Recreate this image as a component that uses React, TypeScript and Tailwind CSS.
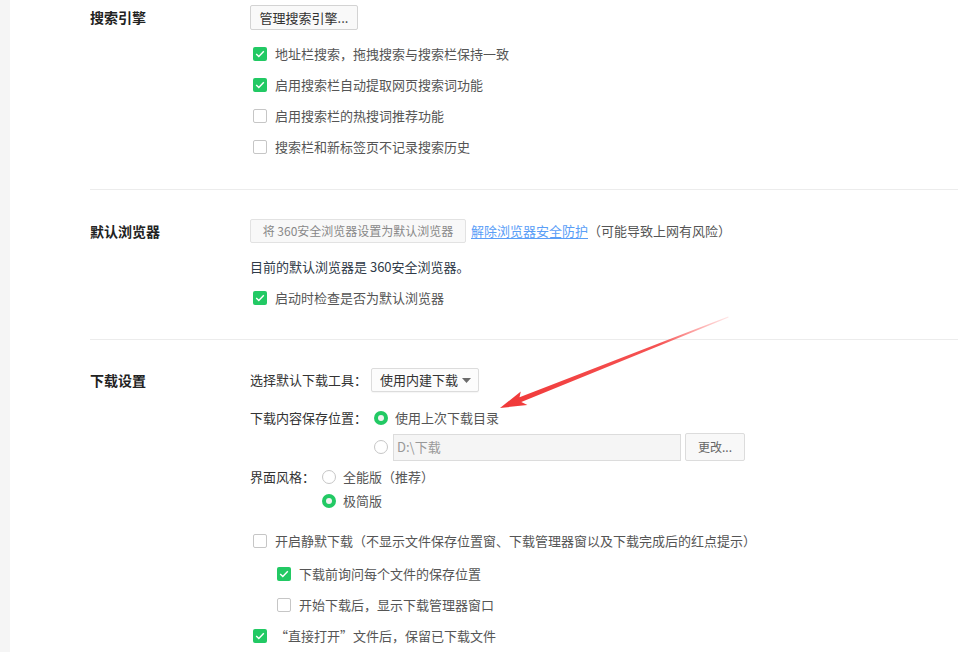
import React from 'react'

function Check({ on }: { on?: boolean }) {
  if (on) {
    return (
      <span className="w-[14px] h-[14px] rounded-[2px] bg-[#22c964] flex items-center justify-center shrink-0">
        <svg width="10" height="8" viewBox="0 0 10 8">
          <path d="M1.2 4.1l2.6 2.5L8.8 1.3" stroke="#fff" strokeWidth="1.4" fill="none" />
        </svg>
      </span>
    )
  }
  return <span className="w-[14px] h-[14px] rounded-[2px] border border-[#c6c6c6] bg-white shrink-0" />
}

function Radio({ on }: { on?: boolean }) {
  if (on) {
    return (
      <span className="w-[14px] h-[14px] rounded-full bg-[#22c964] flex items-center justify-center shrink-0">
        <span className="w-[6px] h-[6px] rounded-full bg-[#f2f2f2]" />
      </span>
    )
  }
  return <span className="w-[14px] h-[14px] rounded-full border border-[#c6c6c6] bg-white shrink-0" />
}

function CheckRow({ on, label, indent }: { on?: boolean; label: string; indent?: boolean }) {
  return (
    <div className={`flex items-center h-[31px] gap-[8px] ${indent ? 'pl-[27px]' : 'pl-[3px]'}`}>
      <Check on={on} />
      <span className="text-[13px] text-[#555]">{label}</span>
    </div>
  )
}

function Section({
  title,
  className,
  titleH,
  children,
}: {
  title: string
  className: string
  titleH: string
  children: React.ReactNode
}) {
  return (
    <div className={`flex border-b border-[#ececec] ${className}`}>
      <div className={`w-[160px] shrink-0 text-[14px] font-bold text-[#222] ${titleH}`}>{title}</div>
      <div className="flex-1 flex flex-col">{children}</div>
    </div>
  )
}

export default function App() {
  return (
    <div className="relative w-[958px] h-[652px] overflow-hidden bg-white flex font-['Noto_Sans_CJK_SC',sans-serif] leading-[20px]">
      <div className="w-[10px] shrink-0 bg-[#f5f5f5]" />
      <div className="flex-1 pl-[80px]">
        {/* 搜索引擎 */}
        <Section title="搜索引擎" className="pt-[5px] pb-[27px]" titleH="leading-[25px]">
          <button className="w-[108px] h-[25px] border border-[#d3d3d3] rounded-[2px] bg-[#f9f9f9] text-[13px] text-[#333] flex items-center justify-center">
            管理搜索引擎...
          </button>
          <div className="mt-[8px]">
            <CheckRow on label="地址栏搜索，拖拽搜索与搜索栏保持一致" />
            <CheckRow on label="启用搜索栏自动提取网页搜索词功能" />
            <CheckRow label="启用搜索栏的热搜词推荐功能" />
            <CheckRow label="搜索栏和新标签页不记录搜索历史" />
          </div>
        </Section>

        {/* 默认浏览器 */}
        <Section title="默认浏览器" className="pt-[29px] pb-[26px]" titleH="leading-[24px]">
          <div className="flex items-center h-[24px]">
            <button className="w-[216px] h-[24px] border border-[#e2e2e2] rounded-[2px] bg-[#f8f8f8] text-[12px] text-[#888] flex items-center justify-center">
              将 360安全浏览器设置为默认浏览器
            </button>
            <span className="ml-[5px] text-[13px] text-[#5a9ef7] underline underline-offset-2">解除浏览器安全防护</span>
            <span className="text-[13px] text-[#555]">（可能导致上网有风险）</span>
          </div>
          <div className="mt-[14px] text-[13px] text-[#2f3a48]">目前的默认浏览器是 360安全浏览器。</div>
          <div className="mt-[5px]">
            <CheckRow on label="启动时检查是否为默认浏览器" />
          </div>
        </Section>

        {/* 下载设置 */}
        <Section title="下载设置" className="pt-[28px] border-b-0" titleH="leading-[24px]">
          <div className="flex items-center h-[24px] gap-[4px]">
            <span className="text-[13px] text-[#333]">选择默认下载工具：</span>
            <div className="w-[108px] h-[24px] border border-[#dcdcdc] rounded-[2px] bg-[#fcfcfc] shadow-[0_1px_1px_rgba(0,0,0,0.04)] flex items-center justify-between pl-[8px] pr-[7px]">
              <span className="text-[13px] text-[#333]">使用内建下载</span>
              <svg width="9" height="5" viewBox="0 0 9 5">
                <path d="M0 0h9L4.5 5z" fill="#6b6b6b" />
              </svg>
            </div>
          </div>

          <div className="mt-[14px] flex items-start gap-[7px]">
            <span className="text-[13px] text-[#333] leading-[24px]">下载内容保存位置：</span>
            <div className="flex flex-col">
              <div className="flex items-center h-[24px] gap-[7px]">
                <Radio on />
                <span className="text-[13px] text-[#555]">使用上次下载目录</span>
              </div>
              <div className="mt-[3px] flex items-center gap-[5px]">
                <Radio />
                <div className="w-[288px] h-[27px] border border-[#dcdcdc] bg-[#f5f5f5] flex items-center pl-[3px] text-[13px] text-[#999]">
                  D:\下载
                </div>
                <button className="ml-[-1px] w-[60px] h-[28px] border border-[#dcdcdc] bg-[#f8f8f8] rounded-[2px] text-[12px] text-[#666] flex items-center justify-center">
                  更改...
                </button>
              </div>
            </div>
          </div>

          <div className="mt-[4px] flex items-start gap-[7px]">
            <span className="text-[13px] text-[#333] leading-[24px]">界面风格：</span>
            <div className="flex flex-col">
              <div className="flex items-center h-[24px] gap-[7px]">
                <Radio />
                <span className="text-[13px] text-[#555]">全能版（推荐）</span>
              </div>
              <div className="flex items-center h-[24px] gap-[7px]">
                <Radio on />
                <span className="text-[13px] text-[#555]">极简版</span>
              </div>
            </div>
          </div>

          <div className="mt-[12px]">
            <CheckRow label="开启静默下载（不显示文件保存位置窗、下载管理器窗以及下载完成后的红点提示）" />
            <div className="mt-[2px]">
              <CheckRow indent on label="下载前询问每个文件的保存位置" />
              <CheckRow indent label="开始下载后，显示下载管理器窗口" />
            </div>
            <CheckRow on label="“直接打开”文件后，保留已下载文件" />
          </div>
        </Section>
      </div>

      {/* annotation arrow */}
      <svg className="absolute inset-0 pointer-events-none" width="958" height="652" viewBox="0 0 958 652">
        <defs>
          <linearGradient id="arrowFade" x1="728" y1="317" x2="500" y2="408" gradientUnits="userSpaceOnUse">
            <stop offset="0" stopColor="#ff5a5a" stopOpacity="0.15" />
            <stop offset="0.3" stopColor="#f44040" stopOpacity="0.9" />
            <stop offset="1" stopColor="#f03838" />
          </linearGradient>
        </defs>
        <polygon
          points="728.2,316.6 519.5,397.3 520.8,391.5 500,408 527.4,405 521.3,402.1 728.6,317.4"
          fill="url(#arrowFade)"
        />
      </svg>
    </div>
  )
}
